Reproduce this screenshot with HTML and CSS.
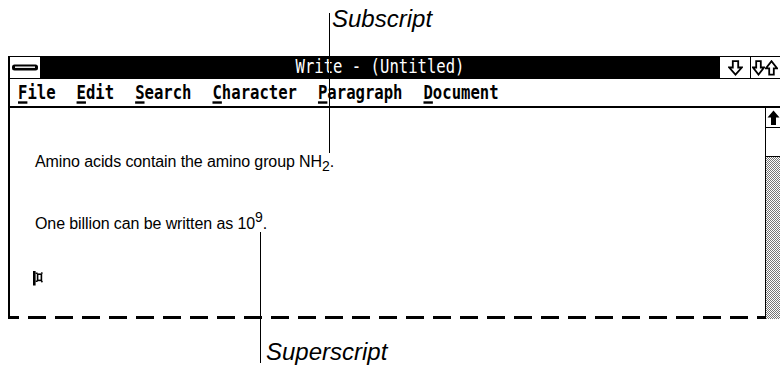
FILE: index.html
```html
<!DOCTYPE html>
<html lang="en">
<head>
<meta charset="utf-8">
<title>Write - (Untitled)</title>
<link rel="stylesheet" href="styles.css">
</head>
<body>
<div class="page">
  <div class="callout callout-top"><span class="callout-label">Subscript</span></div>

  <div class="window">
    <div class="titlebar">
      <div class="sysbox">
        <svg width="26" height="7" viewBox="0 0 26 7"><rect x="0" y="0.5" width="26" height="6" rx="2.5" fill="#000"/><rect x="3" y="2.5" width="20" height="1.4" fill="#fff"/></svg>
      </div>
      <div class="title"><span class="title-text">Write - (Untitled)</span></div>
      <div class="tbtn">
        <svg width="15" height="16" viewBox="0 0 15 16"><path d="M4.8 1.2h5.4v6.3h3.6L7.5 14.6 1.2 7.5h3.6z" fill="#fff" stroke="#000" stroke-width="1.8" stroke-linejoin="miter"/></svg>
      </div>
      <div class="tbtn tbtn-max">
        <svg width="13" height="16" viewBox="0 0 13 16"><path d="M4.2 1.2h4.6v6.3h3.2L6.5 14.6 1 7.5h3.2z" fill="#fff" stroke="#000" stroke-width="1.8"/></svg>
        <svg width="13" height="16" viewBox="0 0 13 16"><path d="M4.2 14.6h4.6V8.3h3.2L6.5 1.2 1 8.3h3.2z" fill="#fff" stroke="#000" stroke-width="1.8"/></svg>
      </div>
    </div>

    <div class="menubar">
      <span class="menu-item"><u>F</u>ile</span>
      <span class="menu-item"><u>E</u>dit</span>
      <span class="menu-item"><u>S</u>earch</span>
      <span class="menu-item"><u>C</u>haracter</span>
      <span class="menu-item"><u>P</u>aragraph</span>
      <span class="menu-item"><u>D</u>ocument</span>
    </div>

    <div class="client">
      <div class="doc">
        <div class="doc-body">
          <p class="line line-1">Amino acids contain the amino group NH<span class="sub">2</span>.</p>
          <p class="line line-2">One billion can be written as 10<span class="sup">9</span>.</p>
          <div class="endmark">
            <svg width="12" height="15" viewBox="0 0 12 15"><rect x="0" y="0" width="2.6" height="14.5" fill="#000"/><path d="M2.6 2.3h2M2.6 10.3h2M9.4 1.4 8.4 2.6M9.4 11.2 8.4 10" stroke="#000" stroke-width="1.5" fill="none"/><rect x="4.6" y="3.2" width="3.8" height="6.2" fill="none" stroke="#000" stroke-width="1.6"/></svg>
          </div>
        </div>
        <div class="torn"></div>
      </div>
      <div class="vscroll">
        <div class="sb-up">
          <svg width="13" height="18" viewBox="0 0 13 18"><path d="M6.5 1.5 12.5 8.5H9V16H4V8.5H0.5z" fill="#000"/></svg>
        </div>
        <div class="sb-thumb"></div>
        <div class="sb-track"></div>
      </div>
    </div>
  </div>

  <div class="callout callout-bottom"><span class="callout-label">Superscript</span></div>

  <div class="leader leader-sub"></div>
  <div class="leader leader-sup"></div>
</div>
</body>
</html>
```

FILE: styles.css
```css
html, body {
  margin: 0;
  padding: 0;
  background: #fff;
}

body {
  overflow: hidden;
}

.page {
  position: relative;
  width: 780px;
  height: 374px;
  font-family: "Liberation Sans", Arial, sans-serif;
  color: #000;
}

/* callouts */
.callout {
  box-sizing: border-box;
}

.callout-top {
  height: 56px;
  padding: 5px 0 0 332px;
}

.callout-bottom {
  padding: 19px 0 0 266px;
}

.callout-label {
  font-style: italic;
  font-size: 24px;
  line-height: 28px;
}

.leader {
  position: absolute;
  width: 1.4px;
  background: #000;
}

.leader-sub {
  left: 328.5px;
  top: 13px;
  height: 140px;
}

.leader-sup {
  left: 259.5px;
  top: 232px;
  height: 131px;
}

/* window */
.window {
  margin-left: 8px;
  width: 772px;
  border-left: 2px solid #000;
  box-sizing: border-box;
}

.titlebar {
  display: flex;
  height: 23px;
  padding: 1px 0;
  box-sizing: border-box;
  background: #000;
}

.sysbox {
  width: 30px;
  background: #fff;
  display: flex;
  align-items: center;
  justify-content: center;
}

.title {
  flex: 1;
  text-align: center;
  color: #fff;
  font-family: "DejaVu Sans Mono", "Liberation Mono", monospace;
  font-size: 15.6px;
  line-height: 21px;
}

.title-text {
  display: inline-block;
  transform: scaleY(1.2);
}

.tbtn {
  width: 30px;
  background: #fff;
  display: flex;
  align-items: center;
  justify-content: center;
}

.tbtn-max {
  width: 29px;
  margin-left: 1px;
  justify-content: flex-start;
  padding-left: 1px;
  box-sizing: border-box;
}

.menubar {
  display: flex;
  gap: 21px;
  height: 29px;
  padding: 5px 0 0 8px;
  box-sizing: border-box;
  border-bottom: 2px solid #000;
  font-family: "DejaVu Sans Mono", "Liberation Mono", monospace;
  font-weight: bold;
  font-size: 15.6px;
  line-height: 20px;
}

.menu-item {
  display: inline-block;
  transform: scaleY(1.2);
  transform-origin: 50% 70%;
}

.menu-item u {
  text-decoration-thickness: 1.5px;
  text-underline-offset: 2px;
}

/* client area */
.client {
  display: flex;
  height: 211px;
}

.doc {
  flex: 1;
  display: flex;
  flex-direction: column;
}

.doc-body {
  flex: 1;
  padding: 43.5px 0 0 25px;
  font-size: 16px;
  line-height: 20px;
  letter-spacing: -0.1px;
}

.line {
  margin: 0;
}

.line-2 {
  margin-top: 42.5px;
}

.sub,
.sup {
  font-size: 14px;
  line-height: 0;
}

.sub {
  vertical-align: -4px;
}

.sup {
  vertical-align: 7px;
}

.endmark {
  margin-top: 37px;
  margin-left: -2px;
  height: 15px;
}

.endmark svg {
  display: block;
}

.torn {
  height: 3px;
  background: repeating-linear-gradient(to right,
    #000 0 9px,
    transparent 9px 18px,
    #000 18px 27px);
}

.vscroll {
  width: 14px;
  border-left: 1px solid #000;
  display: flex;
  flex-direction: column;
}

.sb-up {
  height: 19px;
  border-bottom: 1px solid #000;
  display: flex;
  align-items: center;
  justify-content: center;
}

.sb-thumb {
  height: 28px;
  border-bottom: 1px solid #000;
}

.sb-track {
  flex: 1;
  background: repeating-conic-gradient(#777 0 25%, #fff 0 50%) 0 0 / 2px 2px;
}
```
